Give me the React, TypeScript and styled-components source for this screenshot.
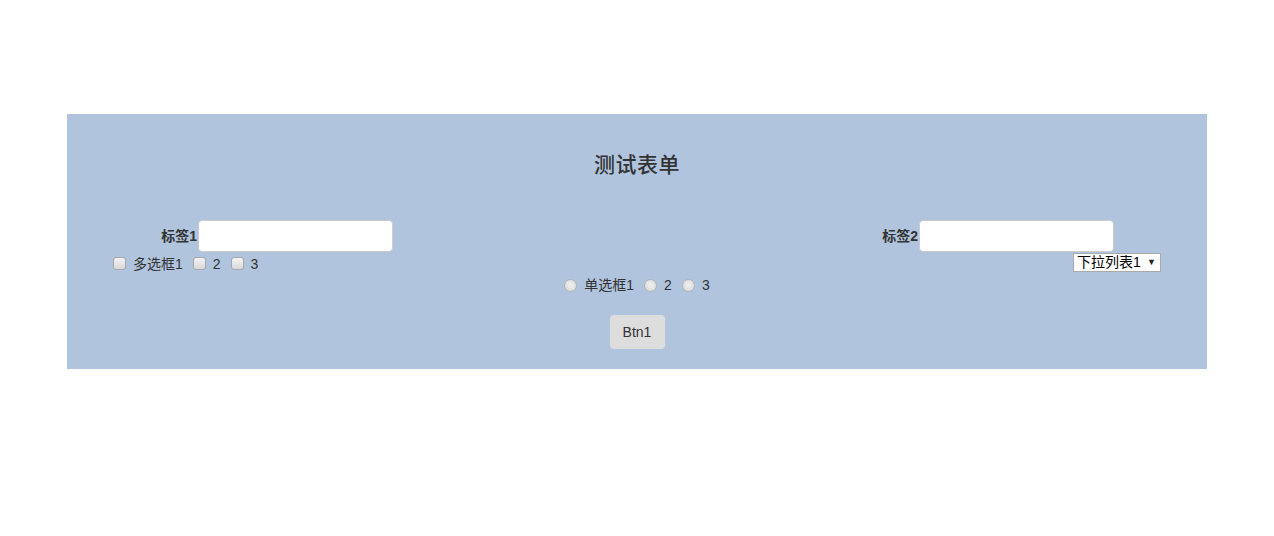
import React from "react";
import styled, { createGlobalStyle } from "styled-components";

const Global = createGlobalStyle`
  html, body { margin: 0; padding: 0; background: #ffffff; }
  body {
    font-family: "Liberation Sans", "Noto Sans CJK SC", Arial, sans-serif;
    font-size: 14px;
    color: #333333;
  }
  * { box-sizing: border-box; }
`;

const Panel = styled.form`
  width: 1140px;
  margin: 114px auto 0;
  background: #b0c4de;
  padding: 36px 0 20px;
  display: flex;
  flex-direction: column;
`;

const Title = styled.h3`
  margin: 0 0 40px;
  height: 30px;
  line-height: 30px;
  text-align: center;
  font-size: 21px;
  font-weight: 500;
  color: #333333;
  letter-spacing: 0.5px;
`;

const FieldRow = styled.div`
  display: flex;
  justify-content: space-between;
  align-items: center;
  height: 32px;
  padding-right: 93px;
`;

const Field = styled.div`
  display: flex;
  align-items: center;
`;

const Label = styled.label<{ $width?: number }>`
  width: ${(p) => (p.$width ? `${p.$width}px` : "auto")};
  text-align: right;
  font-weight: bold;
  font-size: 14px;
  color: #333333;
  margin-right: 1px;
  margin-bottom: 3px;
`;

const TextInput = styled.input`
  width: 195px;
  height: 32px;
  border: 1px solid #cccccc;
  border-radius: 4px;
  background: #ffffff;
  padding: 6px 12px;
  font-size: 14px;
  outline: none;
`;

const OptionRow = styled.div`
  display: flex;
  justify-content: space-between;
  align-items: center;
  height: 23px;
  padding: 0 46px;
`;

const Group = styled.div`
  display: flex;
  align-items: center;
  gap: 10px;
`;

const Option = styled.label`
  display: inline-flex;
  align-items: center;
  gap: 7px;
  font-size: 14px;
  color: #333333;
  line-height: 20px;
`;

const CheckBox = styled.input`
  appearance: none;
  width: 13px;
  height: 13px;
  margin: 0;
  border: 1px solid #a7a7a7;
  border-radius: 3px;
  background: linear-gradient(#f4f4f4, #d8d8d8);
`;

const Radio = styled(CheckBox)`
  border-radius: 50%;
  background: radial-gradient(circle at 50% 45%, #f2f2f2 0%, #dcdcdc 70%, #cfcfcf 100%);
  border-color: #b5b5b5;
`;

const SelectBox = styled.div`
  position: relative;
  width: 88px;
  height: 19px;
  border: 1px solid #a9a9a9;
  background: #ffffff;
  margin-top: -2px;
`;

const NativeSelect = styled.select`
  appearance: none;
  border: none;
  background: transparent;
  width: 100%;
  height: 100%;
  padding: 0 0 0 3px;
  margin: 0;
  font-family: "Liberation Sans", "Noto Sans CJK SC", Arial, sans-serif;
  font-size: 14px;
  line-height: 17px;
  color: #000000;
  outline: none;
`;

const Arrow = styled.span`
  position: absolute;
  right: 4px;
  top: 3px;
  font-size: 9px;
  line-height: 11px;
  color: #222222;
  pointer-events: none;
`;

const CenterRow = styled.div`
  display: flex;
  justify-content: center;
  align-items: center;
  height: 20px;
`;

const ButtonRow = styled.div`
  display: flex;
  justify-content: center;
  margin-top: 20px;
`;

const Button = styled.button`
  width: 55px;
  height: 34px;
  border: none;
  border-radius: 4px;
  background: #dddddd;
  color: #333333;
  font-family: "Liberation Sans", Arial, sans-serif;
  font-size: 14px;
  padding: 0;
`;

export default function App() {
  return (
    <>
      <Global />
      <Panel onSubmit={(e) => e.preventDefault()}>
        <Title>测试表单</Title>
        <FieldRow>
          <Field>
            <Label $width={130}>标签1</Label>
            <TextInput type="text" />
          </Field>
          <Field>
            <Label>标签2</Label>
            <TextInput type="text" />
          </Field>
        </FieldRow>
        <OptionRow>
          <Group>
            <Option>
              <CheckBox type="checkbox" />
              多选框1
            </Option>
            <Option>
              <CheckBox type="checkbox" />2
            </Option>
            <Option>
              <CheckBox type="checkbox" />3
            </Option>
          </Group>
          <SelectBox>
            <NativeSelect defaultValue="1">
              <option value="1">下拉列表1</option>
              <option value="2">下拉列表2</option>
            </NativeSelect>
            <Arrow>▼</Arrow>
          </SelectBox>
        </OptionRow>
        <CenterRow>
          <Group>
            <Option>
              <Radio type="radio" name="r" />
              单选框1
            </Option>
            <Option>
              <Radio type="radio" name="r" />2
            </Option>
            <Option>
              <Radio type="radio" name="r" />3
            </Option>
          </Group>
        </CenterRow>
        <ButtonRow>
          <Button type="button">Btn1</Button>
        </ButtonRow>
      </Panel>
    </>
  );
}
